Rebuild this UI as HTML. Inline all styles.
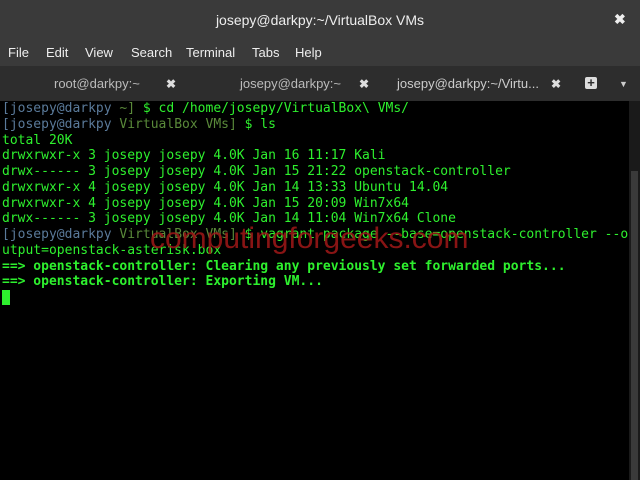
<!DOCTYPE html>
<html><head><style>
body{margin:0;width:640px;height:480px;overflow:hidden;background:#000;font-family:"Liberation Sans",sans-serif;position:relative}
.title{position:absolute;top:0;left:0;width:640px;height:40px;background:#3a3a3a;color:#eee;font-size:14px;text-align:center;line-height:40px}
.x{position:absolute;color:#ddd;font-weight:bold;font-size:14px}
.menu{position:absolute;top:40px;left:0;width:640px;height:26px;background:#3a3a3a;color:#eee;font-size:13px}
.menu span{position:absolute;top:5px}
.tabs{position:absolute;top:66px;left:0;width:640px;height:35px;background:#2d2d2d;color:#bbb;font-size:13px}
.tabs span{position:absolute;top:10px}
.tabs .c{color:#ddd;font-weight:bold;font-size:12px;top:11px}
.term{position:absolute;top:101px;left:2px;font-family:"DejaVu Sans Mono",monospace;font-size:13px;line-height:15.75px;color:#2ef02e;white-space:pre}
.u{color:#5a7a9a}.d{color:#5a8a3a}
.b{font-weight:bold}
.wm{position:absolute;left:150px;top:222px;font-size:30px;color:#a01818;opacity:.85;font-family:"Liberation Sans",sans-serif}
.sb{position:absolute;left:629px;top:101px;width:11px;height:379px;background:#1a1a1a}
.sb div{position:absolute;left:2px;top:70px;width:7px;height:309px;background:#3a3a3a}
</style></head><body>
<div class="title">josepy@darkpy:~/VirtualBox VMs</div>
<div class="x" style="left:614px;top:11px;color:#eee">✖</div>
<div class="menu"><span style="left:8px">File</span><span style="left:46px">Edit</span><span style="left:85px">View</span><span style="left:131px">Search</span><span style="left:186px">Terminal</span><span style="left:252px">Tabs</span><span style="left:295px">Help</span></div>
<div class="tabs">
<span style="left:54px">root@darkpy:~</span><span class="c" style="left:166px">✖</span>
<span style="left:240px">josepy@darkpy:~</span><span class="c" style="left:359px">✖</span>
<span style="left:397px;color:#ccc">josepy@darkpy:~/Virtu...</span><span class="c" style="left:551px">✖</span>
<span style="left:585px;width:12px;height:12px;top:11px;background:#ddd;border-radius:2px;color:#2d2d2d;font-size:13px;line-height:12px;text-align:center;font-weight:bold">+</span>
<span style="left:619px;font-size:9px;top:13px;color:#ccc">▼</span>
</div>
<div class="term"><span class="u">[josepy@darkpy</span> <span class="d">~]</span> $ cd /home/josepy/VirtualBox\ VMs/
<span class="u">[josepy@darkpy</span> <span class="d">VirtualBox VMs]</span> $ ls
total 20K
drwxrwxr-x 3 josepy josepy 4.0K Jan 16 11:17 Kali
drwx------ 3 josepy josepy 4.0K Jan 15 21:22 openstack-controller
drwxrwxr-x 4 josepy josepy 4.0K Jan 14 13:33 Ubuntu 14.04
drwxrwxr-x 4 josepy josepy 4.0K Jan 15 20:09 Win7x64
drwx------ 3 josepy josepy 4.0K Jan 14 11:04 Win7x64 Clone
<span class="u">[josepy@darkpy</span> <span class="d">VirtualBox VMs]</span> $ vagrant package --base=openstack-controller --o
utput=openstack-asterisk.box
<span class="b">==&gt; openstack-controller: Clearing any previously set forwarded ports...
==&gt; openstack-controller: Exporting VM...</span>
<span style="background:#2ef02e"> </span></div>
<div class="wm">computingforgeeks.com</div>
<div class="sb"><div></div></div>
</body></html>
